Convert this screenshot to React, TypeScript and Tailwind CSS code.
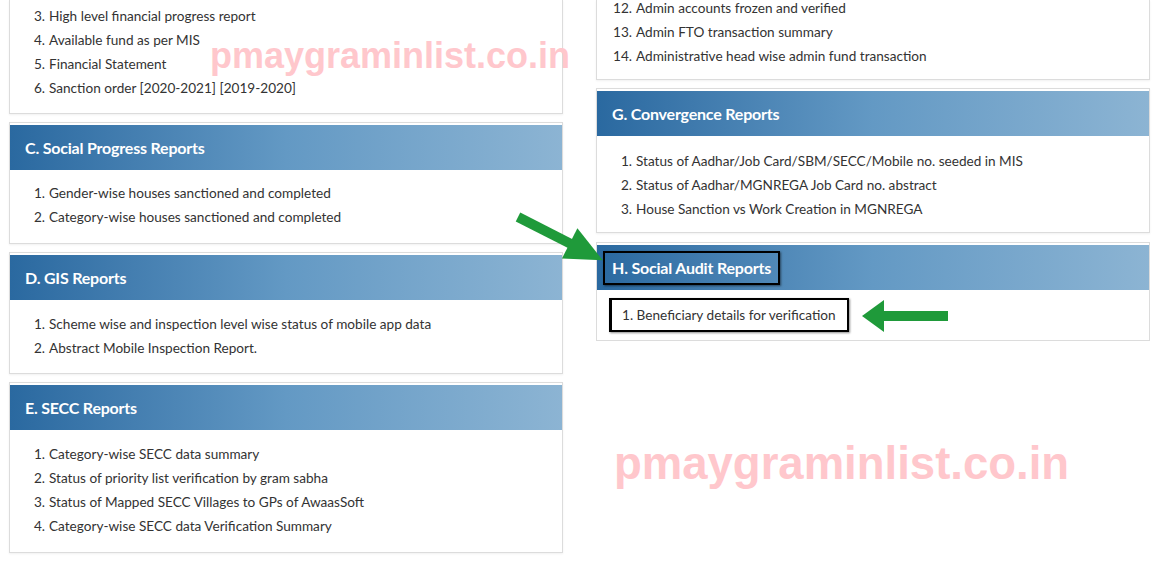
import React from 'react';

// Report index panels (PMAY-G MIS style), two columns with overlay marks.

type Item = { n: number; text: string };

const list = (start: number, texts: string[]): Item[] =>
  texts.map((text, i) => ({ n: start + i, text }));

const HEADER_BG =
  'bg-linear-to-r from-[#2a69a0] via-[#6399c4] to-[#8cb4d3]';

const Row: React.FC<{ item: Item }> = ({ item }) => (
  <div className="flex leading-[24px]">
    <span className="w-[35px] shrink-0 text-right">{item.n}.</span>
    <span className="ml-[4px]">{item.text}</span>
  </div>
);

const Panel: React.FC<{
  title?: string;
  items: Item[];
  clipped?: boolean;
  bodyClass?: string;
}> = ({ title, items, clipped, bodyClass = 'pt-[11px] pb-[14px]' }) => (
  <div
    className={`bg-white border border-[#dcdcdc] shadow-[0_1px_2px_rgba(0,0,0,0.06)] ${
      clipped ? 'border-t-0' : ''
    }`}
  >
    {title && (
      <div className={`mt-[2px] h-[45px] flex items-center pl-[15px] ${HEADER_BG}`}>
        <span className="text-white font-bold text-[16px] tracking-[-0.2px]">{title}</span>
      </div>
    )}
    <div className={bodyClass}>
      {items.map(it => (
        <Row key={it.n} item={it} />
      ))}
    </div>
  </div>
);

const Watermark: React.FC<{ className: string }> = ({ className }) => (
  <div
    className={`absolute pointer-events-none font-bold text-[#ffc7cc] leading-none whitespace-nowrap ${className}`}
    style={{ fontFamily: "'Liberation Sans', Arial, sans-serif" }}
  >
    pmaygraminlist.co.in
  </div>
);

export default function App() {
  return (
    <div
      className="relative w-full h-[581px] overflow-hidden bg-white text-[13.6px] text-[#333]"
      style={{ fontFamily: "Lato, 'Open Sans', sans-serif" }}
    >
      <div className="flex gap-[33px] pl-[9px]">
        {/* left column */}
        <div className="w-[554px] flex flex-col gap-[8px]">
          <Panel
            clipped
            bodyClass="pt-[4px] pb-[13px]"
            items={list(3, [
              'High level financial progress report',
              'Available fund as per MIS',
              'Financial Statement',
              'Sanction order [2020-2021] [2019-2020]',
            ])}
          />
          <Panel
            title="C. Social Progress Reports"
            items={list(1, [
              'Gender-wise houses sanctioned and completed',
              'Category-wise houses sanctioned and completed',
            ])}
          />
          <Panel
            title="D. GIS Reports"
            bodyClass="pt-[12px] pb-[13px]"
            items={list(1, [
              'Scheme wise and inspection level wise status of mobile app data',
              'Abstract Mobile Inspection Report.',
            ])}
          />
          <Panel
            title="E. SECC Reports"
            bodyClass="pt-[12px] pb-[14px]"
            items={list(1, [
              'Category-wise SECC data summary',
              'Status of priority list verification by gram sabha',
              'Status of Mapped SECC Villages to GPs of AwaasSoft',
              'Category-wise SECC data Verification Summary',
            ])}
          />
        </div>

        {/* right column */}
        <div className="w-[554px] flex flex-col gap-[8px]">
          <Panel
            clipped
            bodyClass="-mt-[4px] pb-[11px]"
            items={list(12, [
              'Admin accounts frozen and verified',
              'Admin FTO transaction summary',
              'Administrative head wise admin fund transaction',
            ])}
          />
          <Panel
            title="G. Convergence Reports"
            bodyClass="pt-[13px] pb-[11px]"
            items={list(1, [
              'Status of Aadhar/Job Card/SBM/SECC/Mobile no. seeded in MIS',
              'Status of Aadhar/MGNREGA Job Card no. abstract',
              'House Sanction vs Work Creation in MGNREGA',
            ])}
          />
          <div className="bg-white border border-[#dcdcdc] mt-[1px]">
            <div className={`mt-[2px] h-[45px] flex items-start pt-[6px] pl-[6px] ${HEADER_BG}`}>
              <span className="h-[34px] flex items-center border-2 border-black px-[7px] text-white font-bold text-[16px] tracking-[-0.2px] shadow-[1px_1px_2px_rgba(0,0,0,0.5)]">
                H. Social Audit Reports
              </span>
            </div>
            <div className="pt-[8px] pb-[8px] pl-[12px]">
              <span className="inline-flex h-[34px] items-center border-2 border-l-[3px] border-black pl-[10px] pr-[11px] shadow-[1px_1px_2px_rgba(0,0,0,0.45)]">
                1. Beneficiary details for verification
              </span>
            </div>
          </div>
        </div>
      </div>

      {/* overlays */}
      <Watermark className="left-[210px] top-[38px] text-[36px]" />
      <Watermark className="left-[614px] top-[441px] text-[45.5px]" />

      <svg className="absolute left-[510px] top-[205px]" width="100" height="70" viewBox="0 0 100 70">
        <g transform="translate(8 12) rotate(27)">
          <rect x="0" y="-5" width="62" height="10" fill="#1f9a3a" />
          <polygon points="58,-17 95,0 58,17" fill="#1f9a3a" />
        </g>
      </svg>
      <svg className="absolute left-[860px] top-[298px]" width="92" height="36" viewBox="0 0 92 36">
        <rect x="22" y="13" width="66" height="10" fill="#1f9a3a" />
        <polygon points="2,18 24,2 24,34" fill="#1f9a3a" />
      </svg>
    </div>
  );
}
